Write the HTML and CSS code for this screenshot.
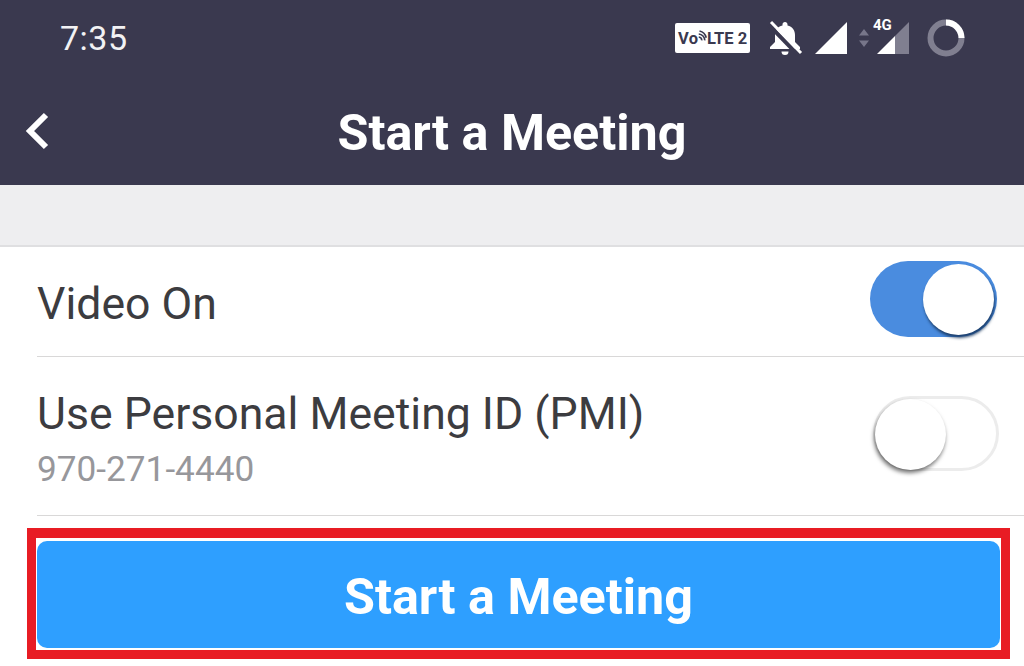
FILE: index.html
```html
<!DOCTYPE html>
<html lang="en">
<head>
<meta charset="utf-8">
<title>Start a Meeting</title>
<link rel="stylesheet" href="styles.css">
</head>
<body>
<div class="page">
  <header class="header">
    <div class="status">
      <span class="time">7:35</span>
      <div class="status-icons">
        <span class="volte"><span>V</span><span class="volte-o">o</span><svg class="volte-wifi" viewBox="0 0 12 14" width="9" height="11"><path d="M1 9a4.500 4.500 0 0 1 4 4.500M1 5a8.500 8.500 0 0 1 8 8.500M2 1a12 12 0 0 1 9 9" fill="none" stroke="#3a394f" stroke-width="2.200"/></svg><span>LTE</span><span class="volte-2">2</span></span>
        <svg class="icon-bell" viewBox="0 0 36 36" width="36" height="36"><path d="M18 2c1.500 0 2.500 1 2.500 2.500v1c5 1.200 7.500 5 7.500 9.500v7l5 5v2H3v-2l5-5v-7c0-4.500 2.500-8.300 7.500-9.500v-1C15.500 3 16.500 2 18 2z" fill="#fff"/><path d="M14.500 31.500h7a3.500 3.500 0 0 1-7 0z" fill="#fff"/><path d="M2 5l29 30" stroke="#3a394f" stroke-width="4"/><path d="M4 2l30 31" stroke="#fff" stroke-width="3"/></svg>
        <svg class="icon-signal" viewBox="0 0 32 32" width="32" height="32"><path d="M32 0v32H0z" fill="#fff"/></svg>
        <svg class="icon-arrows" viewBox="0 0 12 18" width="12" height="18"><path d="M6 0l5 6.500H1zM6 18l-5-6.500h10z" fill="#77768a"/></svg>
        <span class="net">
          <span class="net-label">4G</span>
          <svg class="icon-net" viewBox="0 0 32 32" width="32" height="32"><path d="M32 0v32H18V14z" fill="#807f90"/><path d="M18 14v18H0z" fill="#fff"/></svg>
        </span>
        <svg class="icon-ring" viewBox="0 0 38 38" width="38" height="38"><circle cx="19" cy="19" r="15.500" fill="none" stroke="#807f90" stroke-width="6"/><path d="M19 3.500A15.500 15.500 0 0 1 34.500 19" fill="none" stroke="#fff" stroke-width="6"/></svg>
      </div>
    </div>
    <div class="nav">
      <svg class="back" viewBox="0 0 28 40" width="28" height="40"><path d="M22 4L6 20l16 16" fill="none" stroke="#fff" stroke-width="6"/></svg>
      <h1 class="title">Start a Meeting</h1>
    </div>
  </header>
  <div class="band"></div>
  <section class="list">
    <div class="row row-video">
      <span class="label">Video On</span>
      <span class="toggle toggle-on"><span class="knob"></span></span>
    </div>
    <div class="row row-pmi">
      <div class="text">
        <div class="label">Use Personal Meeting ID (PMI)</div>
        <div class="sub">970-271-4440</div>
      </div>
      <span class="toggle toggle-off"><span class="knob"></span></span>
    </div>
  </section>
  <div class="action">
    <div class="frame">
      <button class="start">Start a Meeting</button>
    </div>
  </div>
</div>
</body>
</html>
```
FILE: styles.css
```css
* { box-sizing: border-box; }
html, body { margin: 0; padding: 0; }
body {
  width: 1024px;
  height: 666px;
  overflow: hidden;
  background: #fff;
  font-family: Roboto, "Liberation Sans", sans-serif;
}
.page { display: flex; flex-direction: column; height: 666px; }
.header { height: 185px; background: #3a394f; color: #fff; }
.status {
  height: 76px;
  display: flex;
  align-items: center;
  justify-content: space-between;
  padding: 0 59px 0 60px;
}
.time { font-size: 34px; color: #f2f2f4; letter-spacing: .5px; }
.status-icons { display: flex; align-items: center; }
.volte {
  width: 75px;
  height: 30px;
  background: #fff;
  border-radius: 2px;
  color: #3a394f;
  font-size: 16.500px;
  font-weight: 700;
  display: flex;
  align-items: center;
  justify-content: center;
  margin-right: 17px;
}
.volte-wifi { margin: -6px 0 0 0; }
.volte-2 { margin-left: 4px; }
.icon-bell { margin-right: 12px; }
.icon-signal { margin-right: 11px; }
.icon-arrows { margin-right: 7px; }
.net { position: relative; display: block; width: 32px; height: 32px; margin-right: 18px; }
.net-label {
  position: absolute;
  left: -4px;
  top: -5px;
  font-size: 15px;
  font-weight: 700;
  line-height: 16px;
  color: #fff;
}
.icon-net { display: block; }
.nav {
  position: relative;
  height: 109px;
  display: flex;
  align-items: center;
  justify-content: center;
  padding-top: 4px;
}
.back { position: absolute; left: 24px; top: 35px; }
.title { margin: 0; font-size: 50.300px; font-weight: 700; line-height: 60px; color: #fff; }
.band { height: 62px; background: #eeeef0; border-bottom: 2px solid #dfdfe1; }
.list { padding-left: 37px; }
.row {
  display: flex;
  align-items: center;
  justify-content: space-between;
  border-bottom: 1px solid #d9d8d8;
}
.row-video { height: 110px; padding: 4px 27px 0 0; }
.row-video .toggle { margin-bottom: 9px; }
.row-pmi { height: 159px; padding: 5px 25px 0 0; }
.row-pmi .toggle { margin-bottom: 11px; }
.label { font-size: 44.600px; line-height: 50px; color: #3c3c40; }
.sub { font-size: 35.200px; line-height: 40px; color: #97979b; margin-top: 10px; }
.toggle {
  position: relative;
  display: block;
  width: 127px;
  height: 76px;
  border-radius: 39px;
}
.toggle-on { background: #4a8cdf; }
.toggle-off { background: #fff; border: 3px solid #ececec; width: 126px; height: 75px; }
.knob {
  position: absolute;
  width: 71px;
  height: 71px;
  border-radius: 50%;
  background: #fff;
}
.toggle-on .knob { right: 3px; top: 3px; box-shadow: 1px 3px 3px rgba(20, 50, 90, .85); }
.toggle-off .knob { left: -1px; top: 0; box-shadow: -1px 3px 4px rgba(0, 0, 0, .55); }
.action { padding: 12px 14px 0 27px; }
.frame { height: 131px; border: 9px solid #e81c24; border-top-width: 10px; padding: 3px 1px 2px; }
.start {
  display: block;
  width: 100%;
  height: 107px;
  border: 0;
  border-radius: 10px;
  background: #2e9fff;
  color: #fff;
  font-family: inherit;
  font-size: 50.300px;
  font-weight: 700;
  padding: 4px 0 0;
}
```
